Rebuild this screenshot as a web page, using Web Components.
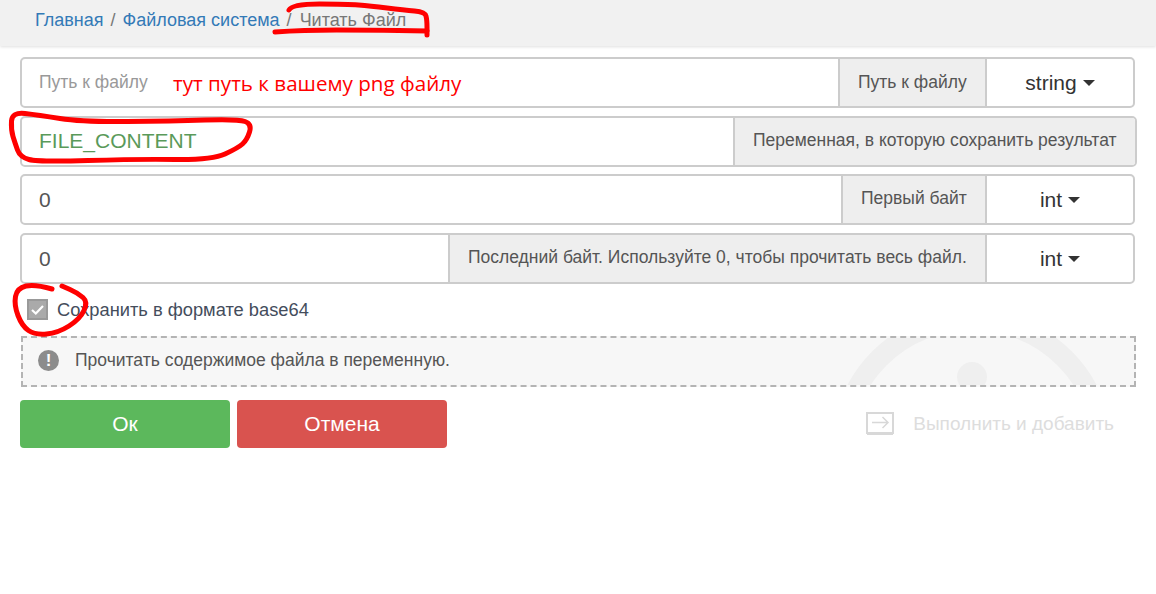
<!DOCTYPE html>
<html lang="ru">
<head>
<meta charset="utf-8">
<title>Читать Файл</title>
<style>
  html, body { margin: 0; padding: 0; background: #fff; }
  body { position: relative; height: 594px; overflow: hidden; font-family: "Liberation Sans", Arial, sans-serif; }
  main { display: flex; flex-direction: column; padding: 11px 19px 0 20px; }
</style>
</head>
<body>
<crumb-bar>
  <crumb-link>Главная</crumb-link>
  <crumb-link>Файловая система</crumb-link>
  <crumb-link current>Читать Файл</crumb-link>
</crumb-bar>
<main>
  <field-row addon-left="816" type="string" hint>Путь к файлу<span slot="addon">Путь к файлу</span></field-row>
  <field-row addon-left="711" wide ok>FILE_CONTENT<span slot="addon">Переменная, в которую сохранить результат</span></field-row>
  <field-row addon-left="819" type="int">0<span slot="addon">Первый байт</span></field-row>
  <field-row addon-left="426" type="int">0<span slot="addon">Последний байт. Используйте 0, чтобы прочитать весь файл.</span></field-row>
  <check-row>Сохранить в формате base64</check-row>
  <hint-box>Прочитать содержимое файла в переменную.</hint-box>
  <action-bar>
    <action-btn color="#5cb85c">Ок</action-btn>
    <action-btn color="#d9534f">Отмена</action-btn>
    <exec-link slot="end">Выполнить и добавить</exec-link>
  </action-bar>
</main>
<red-notes>тут путь к вашему png файлу</red-notes>

<script>
// small helper so every element below stays a few lines long
function shadow(el, html) {
  el.attachShadow({ mode: 'open' }).innerHTML = html;
}

// turns a list of hand-picked points into a soft marker stroke
function stroke(points, closed) {
  const mid = (a, b) => [(a[0] + b[0]) / 2, (a[1] + b[1]) / 2];
  const pts = closed ? [...points, points[0], points[1]] : points;
  let d = 'M' + (closed ? mid(pts[0], pts[1]) : pts[0]).join(' ');
  for (let i = 1; i < pts.length - 1; i++)
    d += ` Q${pts[i].join(' ')} ${mid(pts[i], pts[i + 1]).join(' ')}`;
  if (!closed) d += ` L${pts[pts.length - 1].join(' ')}`;
  return d;
}

class CrumbBar extends HTMLElement {
  constructor() {
    super();
    shadow(this, `<style>
      :host { display: flex; align-items: center; height: 46px; box-sizing: border-box; padding: 0 35px 5px;
        background: #f1f1f1; box-shadow: 0 1px 3px rgba(0,0,0,.13); font-size: 18px; }
    </style><slot></slot>`);
  }
}

class CrumbLink extends HTMLElement {
  constructor() {
    super();
    shadow(this, `<style>
      :host { display: inline-block; color: #337ab7; white-space: nowrap; }
      :host([current]) { color: #777; }
      :host(:not(:first-child))::before { content: "/"; color: #777; padding: 0 7px; }
      :host([current])::before { padding-right: 8px; }
    </style><slot></slot>`);
  }
}

class FieldRow extends HTMLElement {
  constructor() {
    super();
    const type = this.getAttribute('type');
    shadow(this, `<style>
      :host { display: flex; height: 51px; box-sizing: border-box; margin: 0 2px 8px 0; border: 2px solid #ccc;
        border-radius: 5px; background: #fff; overflow: hidden; font-size: 21px; color: #555; }
      :host([wide]) { margin: 0 0 7px 0; }
      :host([hint]) .value { color: #999; font-size: 17.5px; }
      :host([hint]) .addon { padding-bottom: 0; }
      :host([ok]) .value { color: #5a9a5a; padding-bottom: 1px; }
      .value { flex: 0 0 auto; box-sizing: border-box; padding: 0 0 0 17px; display: flex; align-items: center; }
      .addon { flex: 1; display: flex; align-items: center; box-sizing: border-box; min-width: 0; padding: 0 0 2px 18px;
        background: #eee; border-left: 2px solid #ccc; font-size: 17.5px; white-space: nowrap; }
      .type { flex: 0 0 148px; display: flex; align-items: center; justify-content: center; gap: 6px;
        border-left: 2px solid #ccc; color: #333; box-sizing: border-box; }
      .type i { border: 6px solid transparent; border-top-color: #333; border-bottom: 0; margin-top: 1px; }
    </style>
    <div class="value" style="width:${this.getAttribute('addon-left')}px"><slot></slot></div>
    <div class="addon"><slot name="addon"></slot></div>
    ${type ? `<div class="type">${type}<i></i></div>` : ''}`);
  }
}

class CheckRow extends HTMLElement {
  constructor() {
    super();
    shadow(this, `<style>
      :host { display: flex; align-items: center; gap: 9px; height: 21px; margin: 7px 0 16px 7px;
        font-size: 18.3px; color: #444d5c; }
      .box { width: 21px; height: 21px; box-sizing: border-box; border: 2px solid #999; background: #aaa; }
      svg { display: block; }
    </style>
    <div class="box"><svg width="17" height="17" viewBox="0 0 17 17"><path d="M3 9 6.8 12.5 14 5" fill="none" stroke="#fff" stroke-width="2.2"/></svg></div>
    <span><slot></slot></span>`);
  }
}

class HintBox extends HTMLElement {
  constructor() {
    super();
    shadow(this, `<style>
      :host { display: flex; align-items: center; gap: 16px; position: relative; overflow: hidden; height: 51px; box-sizing: border-box;
        margin: 0 1px 13px 1px; padding: 0 0 2px 15px; border: 2px dashed #b4b4b4; background: #f7f7f7;
        font-size: 17.5px; color: #555; }
      .mark { position: absolute; left: 0; top: 0; }
      .icon { position: relative; width: 21px; height: 21px; border-radius: 50%; background: #8c8c8c; color: #fff;
        font: bold 17px/21px "Liberation Sans", sans-serif; text-align: center; }
      span { position: relative; }
    </style>
    <svg class="mark" width="1115" height="47"><circle cx="949" cy="113" r="131" fill="none" stroke="#efefef" stroke-width="20"/><circle cx="949" cy="39" r="15" fill="#efefef"/></svg>
    <div class="icon">!</div>
    <span><slot></slot></span>`);
  }
}

class ActionBar extends HTMLElement {
  constructor() {
    super();
    shadow(this, `<style>
      :host { display: flex; gap: 7px; margin-right: 2px; }
      .end { margin-left: auto; display: flex; }
    </style><slot></slot><div class="end"><slot name="end"></slot></div>`);
  }
}

class ActionBtn extends HTMLElement {
  constructor() {
    super();
    shadow(this, `<style>
      :host { display: flex; align-items: center; justify-content: center; width: 210px; height: 48px;
        border-radius: 4px; background: ${this.getAttribute('color')}; color: #fff; font-size: 21px; }
    </style><slot></slot>`);
  }
}

class ExecLink extends HTMLElement {
  constructor() {
    super();
    shadow(this, `<style>
      :host { display: flex; align-items: center; gap: 19px; padding-right: 21px; color: #ddd; font-size: 19px; }
      svg { display: block; }
    </style>
    <svg width="28" height="24" viewBox="0 0 28 24" fill="none" stroke="#d8d8d8">
      <rect x="1" y="1" width="26" height="20" stroke-width="2"/><path d="M1 21.5h26" stroke-width="3"/>
      <path d="M6 10.5h16M16.5 5l5.5 5.5L16.5 16" stroke-width="1.5"/>
    </svg>
    <span><slot></slot></span>`);
  }
}

// the red marks somebody drew over the screenshot
class RedNotes extends HTMLElement {
  constructor() {
    super();
    const crumbTop = stroke([[289, 10], [292, 4], [347, 4], [370, 6], [404, 10], [425, 12], [427, 20], [427, 35]]);
    const crumbLow = stroke([[275, 32], [303, 30], [370, 30], [427, 31]]);
    const fileRing = stroke([[12, 112], [38, 115], [82, 122], [172, 121], [238, 119], [252, 124], [247, 140], [238, 148], [212, 160], [138, 159], [38, 162], [20, 157], [15, 143], [11, 130]], true);
    const boxRing = stroke([[52, 289], [35, 284], [17, 288], [14, 305], [22, 326], [35, 335], [58, 333], [80, 319], [88, 302], [78, 293], [62, 286]]);
    shadow(this, `<style>
      :host { position: absolute; left: 0; top: 0; width: 1156px; height: 594px; pointer-events: none; }
      svg { position: absolute; left: 0; top: 0; }
      span { position: absolute; left: 173px; top: 69px; color: #f00; white-space: nowrap;
        font: 20.6px/28px "Open Sans", sans-serif; }
    </style>
    <svg width="1156" height="594" fill="none" stroke="#f00" stroke-width="5" stroke-linecap="round" stroke-linejoin="round">
      <path d="${crumbTop}"/><path d="${crumbLow}"/><path d="${fileRing}"/><path d="${boxRing}"/>
    </svg>
    <span><slot></slot></span>`);
  }
}

customElements.define('crumb-bar', CrumbBar);
customElements.define('crumb-link', CrumbLink);
customElements.define('field-row', FieldRow);
customElements.define('check-row', CheckRow);
customElements.define('hint-box', HintBox);
customElements.define('action-bar', ActionBar);
customElements.define('action-btn', ActionBtn);
customElements.define('exec-link', ExecLink);
customElements.define('red-notes', RedNotes);
</script>
</body>
</html>
